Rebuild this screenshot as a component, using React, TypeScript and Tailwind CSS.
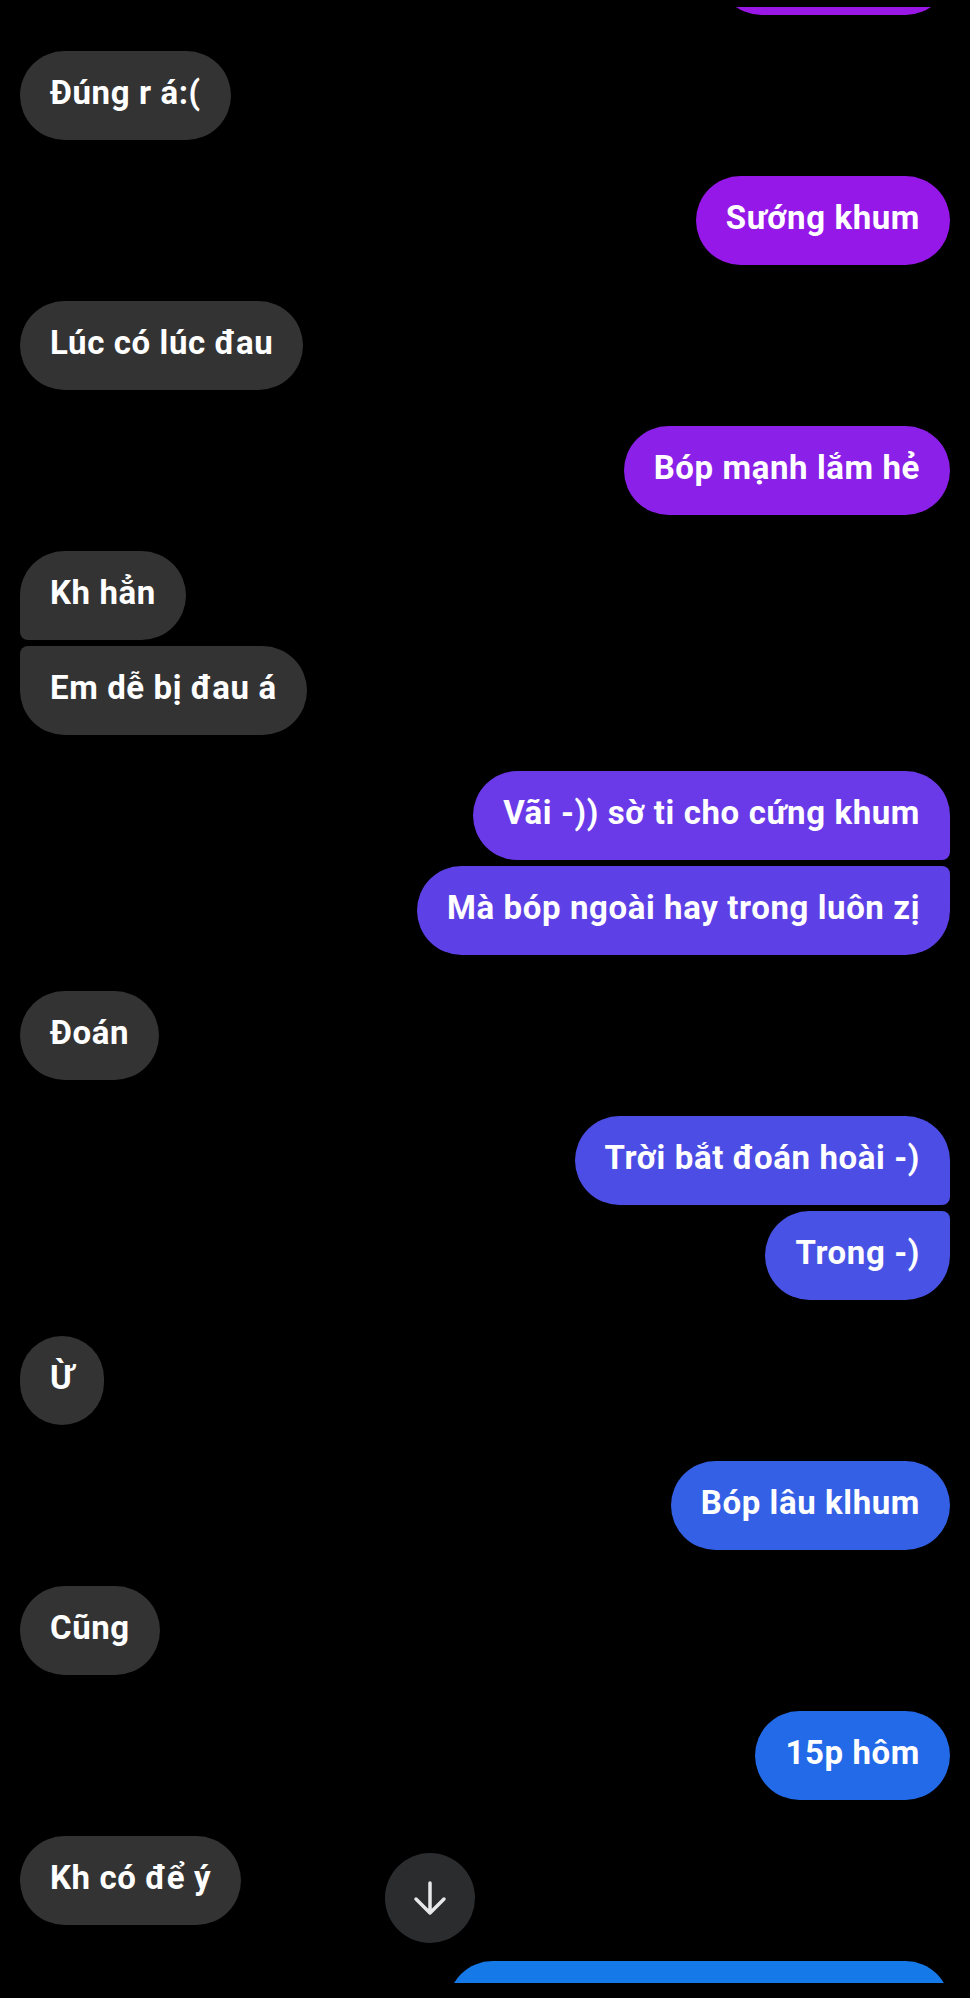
import React from 'react'

type Pos = 'single' | 'first' | 'last'

type Msg = {
  text: string
  me: boolean
  pos: Pos
  bg?: string
  w?: string
  gap: 'none' | 'group' | 'new'
}

const messages: Msg[] = [
  { text: '', me: true, pos: 'single', bg: 'bg-[#9a18e6]', w: 'w-[233px]', gap: 'none' },
  { text: 'Đúng r á:(', me: false, pos: 'single', gap: 'new' },
  { text: 'Sướng khum', me: true, pos: 'single', bg: 'bg-[#9618e8]', gap: 'new' },
  { text: 'Lúc có lúc đau', me: false, pos: 'single', gap: 'new' },
  { text: 'Bóp mạnh lắm hẻ', me: true, pos: 'single', bg: 'bg-[#8b20e8]', gap: 'new' },
  { text: 'Kh hẳn', me: false, pos: 'first', gap: 'new' },
  { text: 'Em dễ bị đau á', me: false, pos: 'last', gap: 'group' },
  { text: 'Vãi -)) sờ ti cho cứng khum', me: true, pos: 'first', bg: 'bg-[#6a3ae8]', gap: 'new' },
  { text: 'Mà bóp ngoài hay trong luôn zị', me: true, pos: 'last', bg: 'bg-[#5e41e6]', gap: 'group' },
  { text: 'Đoán', me: false, pos: 'single', gap: 'new' },
  { text: 'Trời bắt đoán hoài -)', me: true, pos: 'first', bg: 'bg-[#4c4de5]', gap: 'new' },
  { text: 'Trong -)', me: true, pos: 'last', bg: 'bg-[#4853e5]', gap: 'group' },
  { text: 'Ừ', me: false, pos: 'single', gap: 'new' },
  { text: 'Bóp lâu klhum', me: true, pos: 'single', bg: 'bg-[#3460e6]', gap: 'new' },
  { text: 'Cũng', me: false, pos: 'single', gap: 'new' },
  { text: '15p hôm', me: true, pos: 'single', bg: 'bg-[#236ae8]', gap: 'new' },
  { text: 'Kh có để ý', me: false, pos: 'single', gap: 'new' },
  { text: '', me: true, pos: 'single', bg: 'bg-[#1579e8]', w: 'w-[502px]', gap: 'new' },
]

const corners = (me: boolean, pos: Pos) => {
  if (pos === 'single') return 'rounded-[45px]'
  if (me) {
    return pos === 'first'
      ? 'rounded-tl-[45px] rounded-tr-[45px] rounded-br-[8px] rounded-bl-[45px]'
      : 'rounded-tl-[45px] rounded-tr-[8px] rounded-br-[45px] rounded-bl-[45px]'
  }
  return pos === 'first'
    ? 'rounded-tl-[45px] rounded-tr-[45px] rounded-br-[45px] rounded-bl-[8px]'
    : 'rounded-tl-[8px] rounded-tr-[45px] rounded-br-[45px] rounded-bl-[45px]'
}

const Bubble = ({ m }: { m: Msg }) => {
  const gap = m.gap === 'new' ? 'mt-[36px]' : m.gap === 'group' ? 'mt-[6px]' : ''
  return (
    <div className={`flex ${m.me ? 'justify-end' : 'justify-start'} ${gap}`}>
      <div
        className={`h-[89px] px-[30px] pt-[21px] text-[33px] leading-[41px] tracking-[0.6px] font-bold text-white whitespace-nowrap ${corners(
          m.me,
          m.pos
        )} ${m.me ? m.bg : 'bg-[#333333]'} ${m.w ?? ''}`}
      >
        {m.text}
      </div>
    </div>
  )
}

const App = () => {
  return (
    <section className="relative w-full h-[1998px] bg-black overflow-hidden font-['Roboto','Noto_Sans',sans-serif]">
      <div className="mt-[7px] h-[1976px] overflow-hidden">
        <div className="flex flex-col px-[20px] -mt-[81px]">
          {messages.map((m, i) => (
            <Bubble key={i} m={m} />
          ))}
        </div>
      </div>
      <button className="absolute left-[385px] top-[1853px] w-[90px] h-[90px] rounded-full bg-[#2b2c2e] flex items-center justify-center">
        <svg width="36" height="36" viewBox="0 0 36 36" fill="none">
          <path
            d="M18 3 V33 M4 19 L18 33 L32 19"
            stroke="#e8e8ea"
            strokeWidth="3.5"
            strokeLinecap="round"
            strokeLinejoin="round"
          />
        </svg>
      </button>
    </section>
  )
}

export default App
